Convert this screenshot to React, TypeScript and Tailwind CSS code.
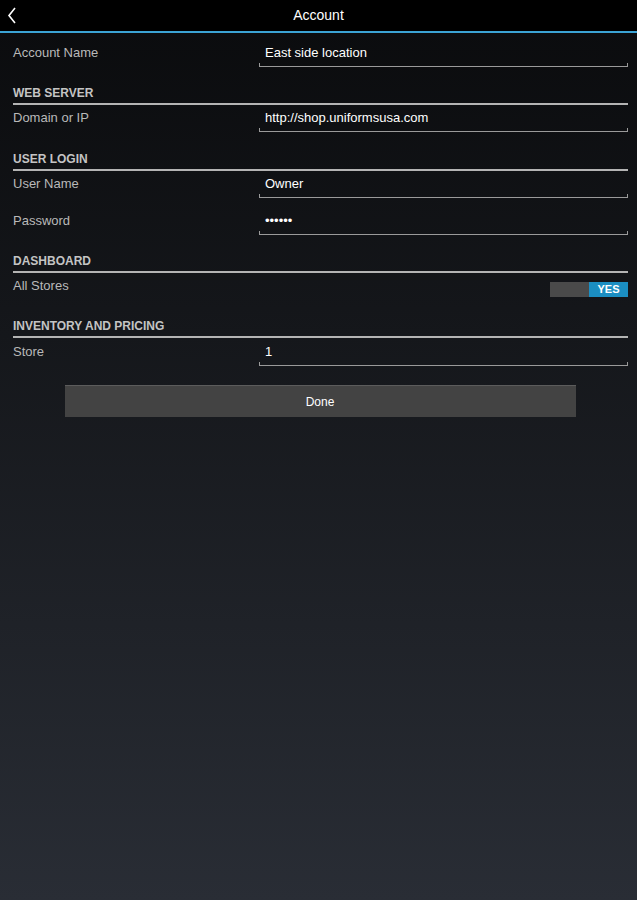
import { ReactNode } from 'react';

function SectionHeader({ title }: { title: string }) {
  return (
    <div className="border-b-2 border-[#b4b4b4] pb-[2px] text-[12px] font-bold leading-[16px] text-[#c4c4c4]">
      {title}
    </div>
  );
}

function FieldRow({ label, value, className = '' }: { label: string; value: string; className?: string }) {
  return (
    <div className={`flex ${className}`}>
      <div className="w-[246px] text-[13px] leading-[20px] text-[#b9b9b9]">{label}</div>
      <div className="flex-1">
        <div className="pl-[6px] text-[13px] leading-[20px] text-white">{value}</div>
        <div className="h-[4px] border-x border-b border-[#9a9a9a]" />
      </div>
    </div>
  );
}

function Section({ title, children, className = '' }: { title: string; children: ReactNode; className?: string }) {
  return (
    <div className={className}>
      <SectionHeader title={title} />
      {children}
    </div>
  );
}

export default function App() {
  return (
    <div
      className="min-h-screen w-full bg-gradient-to-b from-[#0a0b0d] to-[#292d35]"
      style={{ fontFamily: '"Liberation Sans", Arial, sans-serif' }}
    >
      {/* top bar */}
      <div className="relative flex h-[31px] items-center justify-center bg-black">
        <svg className="absolute left-[7px] top-[7px]" width="10" height="17" viewBox="0 0 10 17">
          <polyline points="8,1 2,8.5 8,16" fill="none" stroke="#ffffff" strokeWidth="1.6" />
        </svg>
        <span className="text-[14px] text-white">Account</span>
      </div>
      <div className="h-[2px] bg-[#3ba3d4]" />

      <div className="pl-[13px] pr-[9px]">
        <FieldRow label="Account Name" value="East side location" className="pt-[10px]" />

        <Section title="WEB SERVER" className="mt-[18px]">
          <FieldRow label="Domain or IP" value="http://shop.uniformsusa.com" className="pt-[3px]" />
        </Section>

        <Section title="USER LOGIN" className="mt-[19px]">
          <FieldRow label="User Name" value="Owner" className="pt-[3px]" />
          <FieldRow label="Password" value="••••••" className="pt-[13px]" />
        </Section>

        <Section title="DASHBOARD" className="mt-[18px]">
          <div className="flex items-start pt-[3px]">
            <div className="flex-1 text-[13px] leading-[20px] text-[#b9b9b9]">All Stores</div>
            <div className="mt-[6px] flex h-[15px] w-[78px]">
              <div className="flex-1 bg-[#4a4a4a]" />
              <div className="flex flex-1 items-center justify-center bg-[#1b8ec2] text-[11px] font-bold text-white">
                YES
              </div>
            </div>
          </div>
        </Section>

        <Section title="INVENTORY AND PRICING" className="mt-[21px]">
          <FieldRow label="Store" value="1" className="pt-[4px]" />
        </Section>
      </div>

      <div className="flex justify-center pt-[19px] pl-[3px]">
        <button className="h-[32px] w-[511px] border-t border-[#5c5c5c] bg-[#434343] text-[12px] text-white">
          Done
        </button>
      </div>
    </div>
  );
}
